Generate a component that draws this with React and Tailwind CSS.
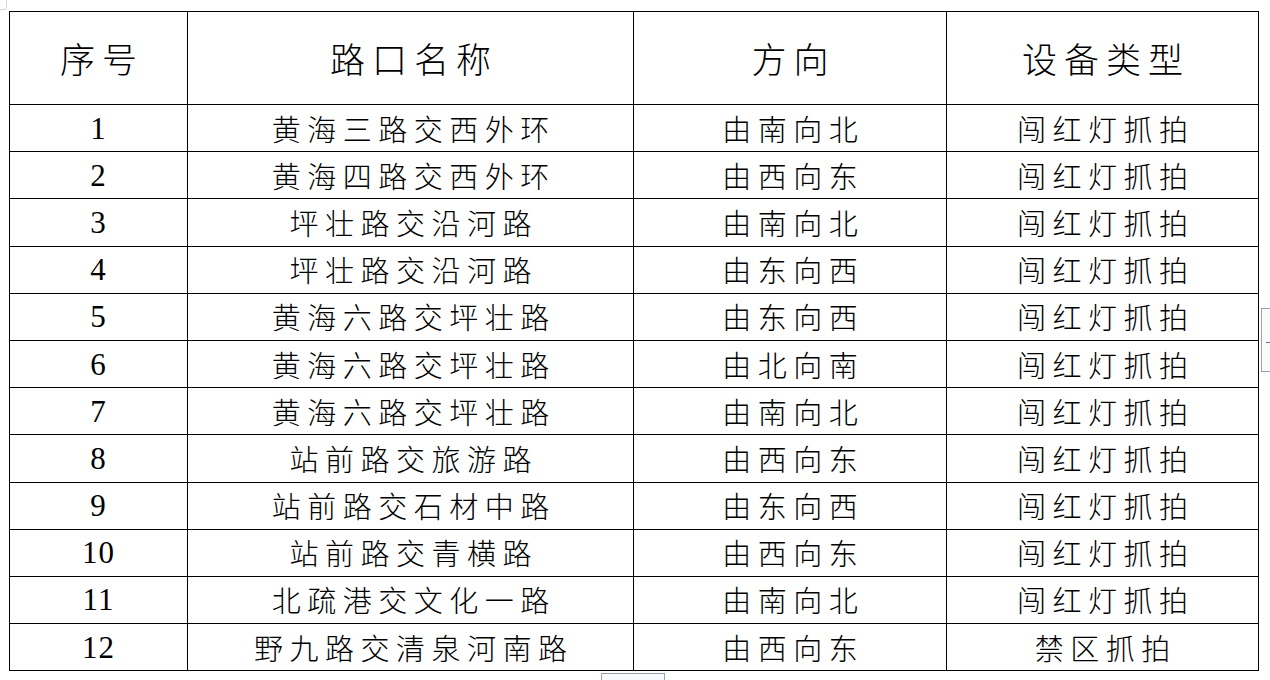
const rows = [
  ['1', '黄海三路交西外环', '由南向北', '闯红灯抓拍'],
  ['2', '黄海四路交西外环', '由西向东', '闯红灯抓拍'],
  ['3', '坪壮路交沿河路', '由南向北', '闯红灯抓拍'],
  ['4', '坪壮路交沿河路', '由东向西', '闯红灯抓拍'],
  ['5', '黄海六路交坪壮路', '由东向西', '闯红灯抓拍'],
  ['6', '黄海六路交坪壮路', '由北向南', '闯红灯抓拍'],
  ['7', '黄海六路交坪壮路', '由南向北', '闯红灯抓拍'],
  ['8', '站前路交旅游路', '由西向东', '闯红灯抓拍'],
  ['9', '站前路交石材中路', '由东向西', '闯红灯抓拍'],
  ['10', '站前路交青横路', '由西向东', '闯红灯抓拍'],
  ['11', '北疏港交文化一路', '由南向北', '闯红灯抓拍'],
  ['12', '野九路交清泉河南路', '由西向东', '禁区抓拍'],
];

const cjk = "font-['Noto_Sans_CJK_SC',sans-serif] font-light";
const num = "font-['Liberation_Serif',serif]";

export default function App() {
  return (
    <div className="relative w-[1270px] h-[680px] bg-white overflow-hidden text-black">
      {/* page artifacts */}
      <div className="absolute left-[-6px] top-[-6px] w-[13px] h-[16px] border border-gray-300 rounded-[3px] bg-white" />
      <div className="absolute left-[601px] top-[673px] w-[64px] h-[12px] border border-gray-400 bg-gray-50" />
      <div className="absolute left-[1261px] top-[308px] w-[14px] h-[64px] border border-gray-400 bg-gray-50">
        <div className="absolute left-[4px] top-[33px] w-[4px] h-px bg-gray-500" />
      </div>

      <div className="pl-[9px] pt-[11px]">
        <table className="table-fixed border-collapse">
          <colgroup>
            <col className="w-[178px]" />
            <col className="w-[446px]" />
            <col className="w-[313px]" />
            <col className="w-[312px]" />
          </colgroup>
          <thead>
            <tr className="h-[93px]">
              {['序号', '路口名称', '方向', '设备类型'].map((h) => (
                <th
                  key={h}
                  className={`border border-black p-0 text-center text-[35px] tracking-[7px] pl-[7px] ${cjk}`}
                >
                  {h}
                </th>
              ))}
            </tr>
          </thead>
          <tbody>
            {rows.map((r) => (
              <tr key={r[0]} className="h-[47.2px]">
                <td className={`border border-black p-0 text-center text-[31px] leading-none tracking-[1px] ${num}`}>
                  {r[0]}
                </td>
                {r.slice(1).map((c, i) => (
                  <td
                    key={i}
                    className={`border border-black p-0 text-center text-[29px] leading-none tracking-[6.5px] pl-[6.5px] ${cjk}`}
                  >
                    {c}
                  </td>
                ))}
              </tr>
            ))}
          </tbody>
        </table>
      </div>
    </div>
  );
}
